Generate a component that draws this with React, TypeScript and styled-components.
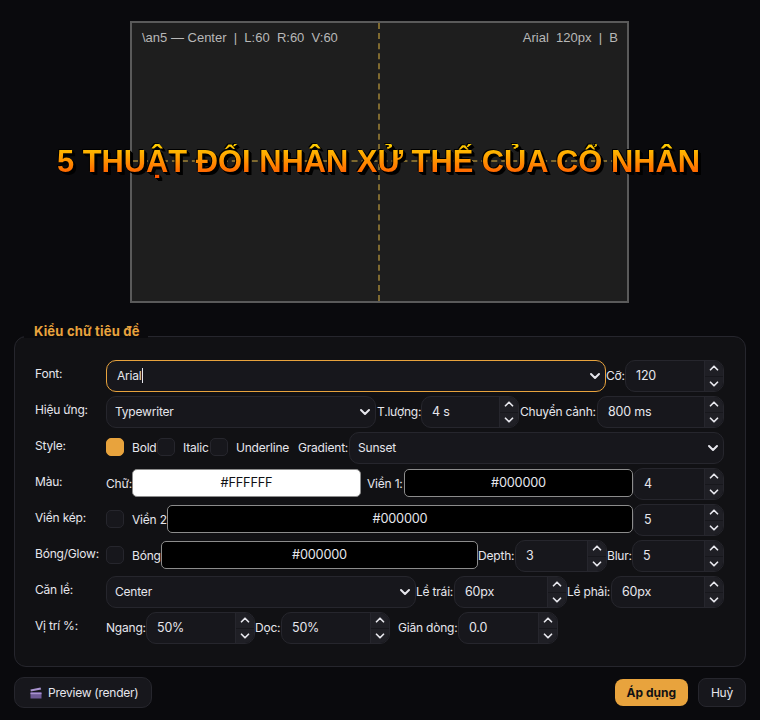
import React from 'react'
import styled, { createGlobalStyle } from 'styled-components'
import { ChevronDown, ChevronUp } from 'lucide-react'

const GlobalStyle = createGlobalStyle`
    html, body {
        margin: 0;
        background: #0a0a0d;
    }
    * {
        box-sizing: border-box;
    }
`

const Page = styled.div`
    width: 760px;
    height: 720px;
    overflow: hidden;
    padding: 21px 14px 0;
    background: #0a0a0d;
    color: #e6e6ec;
    font-family: Inter, 'Liberation Sans', sans-serif;
    font-size: 12px;
    letter-spacing: -0.2px;
`

const Preview = styled.div`
    position: relative;
    display: flex;
    justify-content: space-between;
    width: 499px;
    height: 282px;
    margin: 0 auto 0 116px;
    padding: 7px 9px 7px 10px;
    background: #1e1e1e;
    border: 2px solid #5a5a5a;
    color: #b8b8b8;
    font-family: 'Liberation Sans', Arial, sans-serif;
    font-size: 13px;
    letter-spacing: 0;
    line-height: 16px;
    white-space: pre;
`

const GuideV = styled.div`
    position: absolute;
    top: 0;
    bottom: 0;
    left: 246px;
    border-left: 2px dashed #7f6a30;
`

const GuideH = styled.div`
    position: absolute;
    left: 0;
    right: 0;
    top: 137px;
    border-top: 2px dashed #7f6a30;
`

const Title = styled.div`
    position: absolute;
    left: -102px;
    right: -100px;
    top: 121px;
    text-align: center;
    font-size: 30.85px;
    line-height: 36px;
    font-weight: 700;
    background: linear-gradient(180deg, #ffd000 0%, #ff4a00 100%);
    -webkit-background-clip: text;
    background-clip: text;
    color: transparent;
    filter: drop-shadow(-0.5px -0.5px 0 #000) drop-shadow(1px 1px 0 #000) drop-shadow(1px 1px 0 #000) drop-shadow(1px 1px 0 #000);
`

const Panel = styled.section`
    position: relative;
    display: flex;
    flex-direction: column;
    gap: 4px;
    height: 331px;
    margin-top: 33px;
    padding: 23px 22px 0 20px;
    background: #111114;
    border: 1px solid #26262d;
    border-radius: 12px;
`

const Legend = styled.div`
    position: absolute;
    left: 9px;
    top: -12px;
    height: 13px;
    padding: 0 8px 0 10px;
    background: #0a0a0d;
    color: #e8a33d;
    font-size: 13px;
    letter-spacing: 0.2px;
    line-height: 12px;
    font-weight: 700;
`

const Row = styled.div`
    display: flex;
    align-items: center;
    height: 32px;
`

const RowLabel = styled.div`
    flex: none;
    width: 71px;
    margin-top: -6px;
    color: #e6e6ec;
`

const Text = styled.span<{ $ml?: number; $w?: number }>`
    flex: none;
    width: ${p => (p.$w ? `${p.$w}px` : 'auto')};
    margin-left: ${p => p.$ml ?? 0}px;
    padding-bottom: 2px;
    white-space: nowrap;
`

const Field = styled.div<{ $w: number; $focus?: boolean; $pad?: number }>`
    display: flex;
    align-items: center;
    flex: none;
    width: ${p => p.$w}px;
    height: 32px;
    padding: 0 2px 0 ${p => p.$pad ?? 8}px;
    background: #17171c;
    border: 1px solid ${p => (p.$focus ? '#e8a33d' : '#26262d')};
    border-radius: 10px;
    color: #e6e6ec;
`

const FieldText = styled.span`
    flex: 1;
    padding-bottom: 2px;
`

const Caret = styled.span`
    display: inline-block;
    width: 1px;
    height: 15px;
    vertical-align: -3px;
    background: #e6e6ec;
`

const SpinBox = styled.div<{ $w: number }>`
    display: flex;
    flex: none;
    width: ${p => p.$w}px;
    height: 32px;
    background: #17171c;
    border: 1px solid #26262d;
    border-radius: 10px;
    overflow: hidden;
`

const SpinValue = styled.div`
    flex: 1;
    padding-left: 10px;
    font-size: 12.5px;
    line-height: 30px;
`

const SpinButtons = styled.div`
    display: flex;
    flex: none;
    flex-direction: column;
    gap: 1px;
    width: 19px;
    background: #17171c;
    border-left: 1px solid #26262d;
`

const SpinButton = styled.div`
    display: flex;
    flex: 1;
    align-items: center;
    justify-content: center;
    background: #1f1f25;
    color: #e6e6ec;
`

const Check = styled.div<{ $on?: boolean; $ml?: number }>`
    flex: none;
    width: 18px;
    height: 18px;
    margin-left: ${p => p.$ml ?? 0}px;
    margin-bottom: 2px;
    background: ${p => (p.$on ? '#e8a33d' : '#17171c')};
    border: 1px solid ${p => (p.$on ? '#e8a33d' : '#26262d')};
    border-radius: 5px;
`

const Swatch = styled.div<{ $w: number; $light?: boolean }>`
    flex: none;
    width: ${p => p.$w}px;
    height: 28px;
    margin-bottom: 2px;
    background: ${p => (p.$light ? '#ffffff' : '#000000')};
    border: 1px solid #8c8c8c;
    border-radius: 5px;
    color: ${p => (p.$light ? '#111114' : '#e6e6ec')};
    font-size: 12.75px;
    line-height: 26px;
    text-align: center;
`

const Footer = styled.div`
    display: flex;
    align-items: center;
    margin-top: 10px;
`

const GhostButton = styled.button`
    display: flex;
    align-items: center;
    gap: 6px;
    height: 31px;
    padding: 0 13px 0 15px;
    background: #17171c;
    border: 1px solid #26262d;
    border-radius: 10px;
    color: #e6e6ec;
    font: inherit;
    letter-spacing: -0.25px;
`

const ApplyButton = styled.button`
    height: 27px;
    margin-left: auto;
    padding: 0 12px;
    background: #e8a33d;
    border: none;
    border-radius: 8px;
    color: #111114;
    font: inherit;
    font-weight: 700;
`

const CancelButton = styled.button`
    width: 48px;
    height: 29px;
    margin-left: 10px;
    padding: 0;
    background: #17171c;
    border: 1px solid #26262d;
    border-radius: 8px;
    color: #e6e6ec;
    font: inherit;
    letter-spacing: -0.2px;
`

const Select: React.FC<{ w: number; value: React.ReactNode; focus?: boolean; pad?: number }> = ({ w, value, focus, pad }) => (
    <Field $w={w} $focus={focus} $pad={pad}>
        <FieldText>{value}</FieldText>
        <ChevronDown size={16} strokeWidth={3} color="#e6e6ec" />
    </Field>
)

const Spin: React.FC<{ w: number; value: string }> = ({ w, value }) => (
    <SpinBox $w={w}>
        <SpinValue>{value}</SpinValue>
        <SpinButtons>
            <SpinButton>
                <ChevronUp size={14} strokeWidth={3} />
            </SpinButton>
            <SpinButton>
                <ChevronDown size={14} strokeWidth={3} />
            </SpinButton>
        </SpinButtons>
    </SpinBox>
)

const Clapper: React.FC = () => (
    <svg width="12" height="12" viewBox="0 0 12 12">
        <rect x="0.5" y="5" width="11" height="6.5" fill="#6f5a96" />
        <rect x="0.5" y="6" width="11" height="1.2" fill="#a993cf" />
        <path d="M0.5 2.6 L10.5 0.5 L11.2 2.4 L0.8 4.6 Z" fill="#a993cf" />
    </svg>
)

const App: React.FC = () => {
    return (
        <Page>
            <GlobalStyle />
            <Preview>
                <span>{'\\an5 — Center  |  L:60  R:60  V:60'}</span>
                <span>{'Arial  120px  |  B'}</span>
                <GuideV />
                <GuideH />
                <Title>5 THUẬT ĐỐI NHÂN XỬ THẾ CỦA CỔ NHÂN</Title>
            </Preview>

            <Panel>
                <Legend>Kiểu chữ tiêu đề</Legend>
                <Row>
                    <RowLabel>Font:</RowLabel>
                    <Select
                        w={500}
                        focus
                        pad={10}
                        value={
                            <>
                                Arial
                                <Caret />
                            </>
                        }
                    />
                    <Text $w={19}>Cỡ:</Text>
                    <Spin w={99} value="120" />
                </Row>
                <Row>
                    <RowLabel>Hiệu ứng:</RowLabel>
                    <Select w={270} value="Typewriter" />
                    <Text $ml={1} $w={44}>T.lượng:</Text>
                    <Spin w={98} value="4 s" />
                    <Text $ml={1} $w={77}>Chuyển cảnh:</Text>
                    <Spin w={127} value="800 ms" />
                </Row>
                <Row>
                    <RowLabel>Style:</RowLabel>
                    <Check $on />
                    <Text $ml={8} $w={25}>Bold</Text>
                    <Check />
                    <Text $ml={8} $w={27}>Italic</Text>
                    <Check />
                    <Text $ml={8} $w={62}>Underline</Text>
                    <Text $w={51}>Gradient:</Text>
                    <Select w={375} value="Sunset" />
                </Row>
                <Row>
                    <RowLabel>Màu:</RowLabel>
                    <Text $w={26}>Chữ:</Text>
                    <Swatch $w={229} $light>#FFFFFF</Swatch>
                    <Text $ml={6} $w={37}>Viền 1:</Text>
                    <Swatch $w={229}>#000000</Swatch>
                    <Spin w={91} value="4" />
                </Row>
                <Row>
                    <RowLabel>Viền kép:</RowLabel>
                    <Check />
                    <Text $ml={8} $w={35}>Viền 2</Text>
                    <Swatch $w={466}>#000000</Swatch>
                    <Spin w={91} value="5" />
                </Row>
                <Row>
                    <RowLabel>Bóng/Glow:</RowLabel>
                    <Check />
                    <Text $ml={8} $w={29}>Bóng</Text>
                    <Swatch $w={317}>#000000</Swatch>
                    <Text $w={37}>Depth:</Text>
                    <Spin w={92} value="3" />
                    <Text $w={25}>Blur:</Text>
                    <Spin w={92} value="5" />
                </Row>
                <Row>
                    <RowLabel>Căn lề:</RowLabel>
                    <Select w={310} value="Center" />
                    <Text $w={38}>Lề trái:</Text>
                    <Spin w={113} value="60px" />
                    <Text $w={44}>Lề phải:</Text>
                    <Spin w={113} value="60px" />
                </Row>
                <Row>
                    <RowLabel>Vị trí %:</RowLabel>
                    <Text $w={40}>Ngang:</Text>
                    <Spin w={109} value="50%" />
                    <Text $w={26}>Dọc:</Text>
                    <Spin w={109} value="50%" />
                    <Text $ml={8} $w={60}>Giãn dòng:</Text>
                    <Spin w={100} value="0.0" />
                </Row>
            </Panel>

            <Footer>
                <GhostButton>
                    <Clapper />
                    Preview (render)
                </GhostButton>
                <ApplyButton>Áp dụng</ApplyButton>
                <CancelButton>Huỷ</CancelButton>
            </Footer>
        </Page>
    )
}

export default App
